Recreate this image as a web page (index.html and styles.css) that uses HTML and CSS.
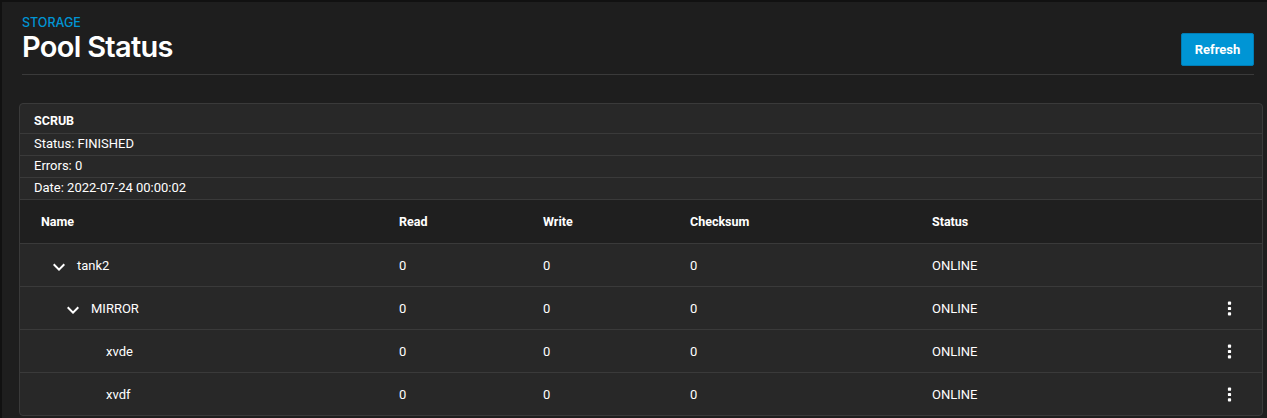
FILE: index.html
```html
<!DOCTYPE html>
<html>
<head>
<meta charset="utf-8">
<link rel="stylesheet" href="styles.css">
</head>
<body>
<div class="page">
  <header class="page-head">
    <div class="titles">
      <div class="crumb">STORAGE</div>
      <h1 class="title">Pool Status</h1>
    </div>
    <button class="btn-refresh">Refresh</button>
  </header>

  <section class="card">
    <div class="scrub-head">SCRUB</div>
    <div class="scrub-row">Status: FINISHED</div>
    <div class="scrub-row">Errors: 0</div>
    <div class="scrub-row">Date: 2022-07-24 00:00:02</div>

    <div class="grid thead">
      <div class="c-name">Name</div>
      <div>Read</div>
      <div>Write</div>
      <div>Checksum</div>
      <div>Status</div>
      <div></div>
    </div>

    <div class="grid trow">
      <div class="c-name lvl0"><svg class="chev" viewBox="0 0 24 24"><path d="M7.41 8.59 12 13.17l4.59-4.58L18 10l-6 6-6-6z"/></svg>tank2</div>
      <div>0</div><div>0</div><div>0</div><div>ONLINE</div>
      <div></div>
    </div>
    <div class="grid trow">
      <div class="c-name lvl1"><svg class="chev" viewBox="0 0 24 24"><path d="M7.41 8.59 12 13.17l4.59-4.58L18 10l-6 6-6-6z"/></svg>MIRROR</div>
      <div>0</div><div>0</div><div>0</div><div>ONLINE</div>
      <div class="c-menu"><svg class="dots" viewBox="0 0 4 14"><rect x="0.5" y="0.5" width="3" height="3" rx="0.8"/><rect x="0.5" y="5.5" width="3" height="3" rx="0.8"/><rect x="0.5" y="10.5" width="3" height="3" rx="0.8"/></svg></div>
    </div>
    <div class="grid trow">
      <div class="c-name lvl2">xvde</div>
      <div>0</div><div>0</div><div>0</div><div>ONLINE</div>
      <div class="c-menu"><svg class="dots" viewBox="0 0 4 14"><rect x="0.5" y="0.5" width="3" height="3" rx="0.8"/><rect x="0.5" y="5.5" width="3" height="3" rx="0.8"/><rect x="0.5" y="10.5" width="3" height="3" rx="0.8"/></svg></div>
    </div>
    <div class="grid trow last">
      <div class="c-name lvl2">xvdf</div>
      <div>0</div><div>0</div><div>0</div><div>ONLINE</div>
      <div class="c-menu"><svg class="dots" viewBox="0 0 4 14"><rect x="0.5" y="0.5" width="3" height="3" rx="0.8"/><rect x="0.5" y="5.5" width="3" height="3" rx="0.8"/><rect x="0.5" y="10.5" width="3" height="3" rx="0.8"/></svg></div>
    </div>
  </section>
</div>
</body>
</html>
```

FILE: styles.css
```css
* { box-sizing: border-box; }
html, body { margin: 0; padding: 0; }
body {
  background: #1e1e1e;
  color: #ffffff;
  font-family: Roboto, "Liberation Sans", Arial, sans-serif;
  font-size: 13px;
  height: 418px;
  overflow: hidden;
}
.page {
  border-top: 2px solid #111111;
  border-left: 2px solid #111111;
  min-height: 418px;
  padding: 13px 4px 0 17px;
}
.page-head {
  display: flex;
  justify-content: space-between;
  align-items: flex-start;
  margin: 0 9px 0 3px;
  border-bottom: 1px solid #3a3a3a;
  height: 60px;
}
.crumb {
  color: #0095d5;
  font-family: Inter, Roboto, sans-serif;
  font-size: 12.5px;
  font-weight: 500;
  line-height: 15px;
}
.title {
  margin: 1px 0 0 0;
  font-family: Inter, Roboto, sans-serif;
  font-size: 29px;
  font-weight: 600;
  line-height: 32px;
  letter-spacing: -0.7px;
}
.btn-refresh {
  margin-top: 18px;
  width: 73px;
  height: 33px;
  background: #0095d5;
  color: #fff;
  border: 1px solid #007db5;
  border-radius: 2px;
  font-family: Roboto, sans-serif;
  font-weight: 700;
  font-size: 13px;
  padding: 0;
}
.card {
  margin-top: 28px;
  background: #282828;
  border: 1px solid #3a3a3a;
  border-radius: 4px;
  overflow: hidden;
}
.scrub-head {
  height: 30px;
  padding: 9px 0 0 14px;
  font-weight: 700;
  font-size: 12.5px;
  border-bottom: 1px solid #3a3a3a;
}
.scrub-row {
  height: 22px;
  padding: 2px 0 0 14px;
  font-size: 13px;
  border-bottom: 1px solid #3a3a3a;
}
.grid {
  display: grid;
  grid-template-columns: 379px 144px 147px 242px 1fr 41px;
  align-items: center;
}
.grid > div:first-child { padding-left: 21px; }
.thead {
  background: #1f1f1f;
  height: 43px;
  font-weight: 700;
  font-size: 12.5px;
}
.trow {
  height: 43px;
  border-top: 1px solid #3a3a3a;
}
.c-name { display: flex; align-items: center; }
.grid > div.lvl0 { padding-left: 27px; }
.grid > div.lvl1 { padding-left: 41px; }
.grid > div.lvl2 { padding-left: 86px; }
.chev {
  width: 24px;
  height: 24px;
  fill: #ffffff;
  margin-right: 6px;
  margin-top: 3px;
}
.c-menu { display: flex; justify-content: flex-start; }
.dots {
  width: 5px;
  height: 15px;
  fill: #ffffff;
  margin-left: 6px;
}
```
